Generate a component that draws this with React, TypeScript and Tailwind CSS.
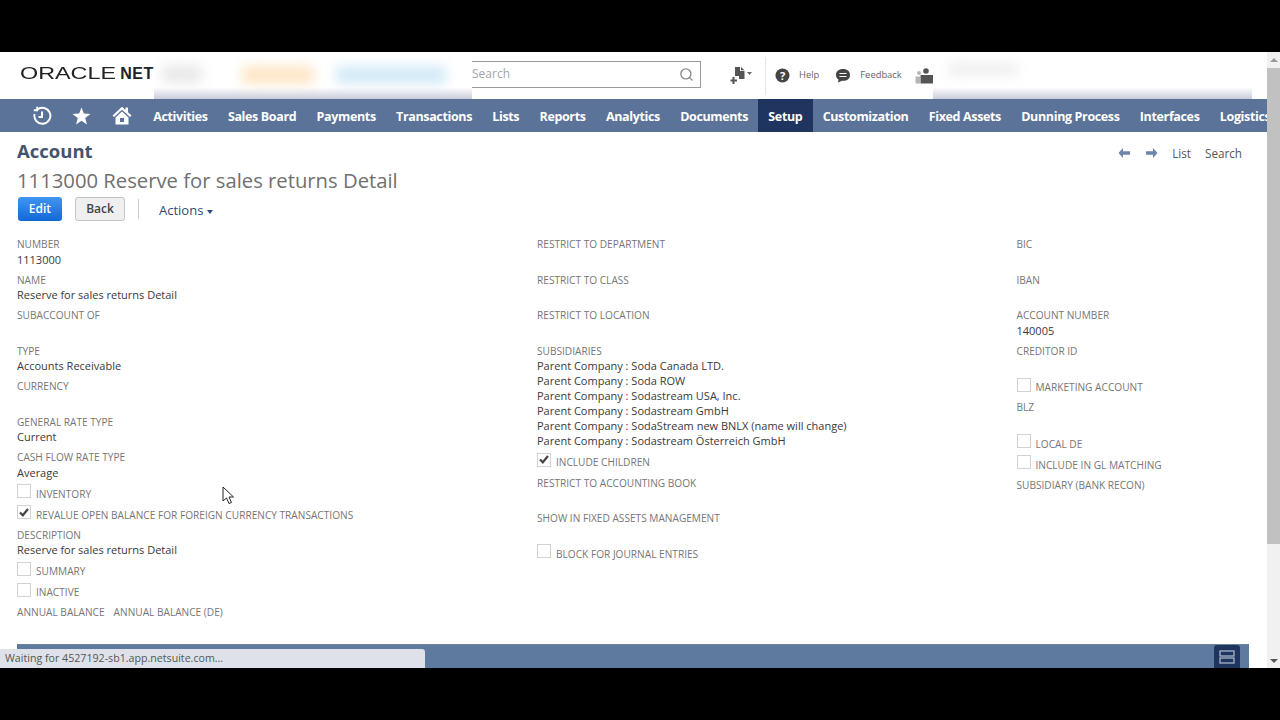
import React from 'react';
import { Search as SearchIcon } from 'lucide-react';

const navItems = ['Activities', 'Sales Board', 'Payments', 'Transactions', 'Lists', 'Reports', 'Analytics', 'Documents', 'Setup', 'Customization', 'Fixed Assets', 'Dunning Process', 'Interfaces', 'Logistics'];

const Field = ({ label, value, h = 'h-[35.5px]' }: { label: string; value?: string; h?: string }) => (
  <div className={`${h} pt-[0.5px] leading-[15px]`}>
    <div className="h-[15px] text-[10.15px] uppercase text-[#767676]">{label}</div>
    {value && <div className="-mt-[0.5px] h-[15px] text-[11px] text-[#3a3a3a]">{value}</div>}
  </div>
);

const Check = ({ label, checked, h = 'h-[21px]' }: { label: string; checked?: boolean; h?: string }) => (
  <div className={`${h} flex items-start gap-[5px]`}>
    <div className="-mt-[1px] flex h-[14px] w-[14px] items-center justify-center border border-[#d2d2d2] bg-white">
      {checked && (
        <svg width="10" height="9" viewBox="0 0 10 9">
          <path d="M1 4.5 L3.8 7.3 L9 1" fill="none" stroke="#444" strokeWidth="2.2" />
        </svg>
      )}
    </div>
    <div className="mt-[1.5px] h-[15px] text-[10.15px] uppercase leading-[15px] text-[#767676]">{label}</div>
  </div>
);

const BlurPatch = ({ children, w }: { children?: React.ReactNode; w: string }) => (
  <div className={`${w} relative h-full shrink-0 overflow-hidden bg-gradient-to-b from-white from-75% to-[#c9cddb]`}>
    {children}
  </div>
);

const App = () => {
  return (
    <div className="relative h-[720px] w-[1280px] overflow-hidden bg-black pt-[52px] font-['Open_Sans',sans-serif]">
      <div className="flex h-[616px] bg-white">
        <div className="flex w-[1267px] flex-col">
          {/* top header */}
          <div className="flex h-[47px] items-center overflow-hidden">
            <div className="flex h-full w-[154px] shrink-0 items-center pb-[3px] pl-[20px] font-['Liberation_Sans',sans-serif] text-[16px] text-[#222]">
              <span className="inline-block w-[102px] origin-left scale-x-[1.46] whitespace-nowrap">ORACLE</span>
              <span className="font-bold tracking-[0.6px]">NET</span>
            </div>
            <BlurPatch w="w-[318px]">
              <div className="absolute left-[8px] top-[13px] h-[18px] w-[40px] rounded bg-[#e9e9e9] blur-[6px]" />
              <div className="absolute left-[88px] top-[14px] h-[18px] w-[72px] rounded bg-[#fde6c6] blur-[6px]" />
              <div className="absolute left-[182px] top-[14px] h-[18px] w-[110px] rounded bg-[#d3eaf7] blur-[6px]" />
            </BlurPatch>
            <div className="mb-[3px] flex h-[27px] w-[229px] shrink-0 items-center justify-between border-y border-r border-[#9a9a9a] pr-[6px] text-[12px] text-[#a5a5a5]">
              Search
              <SearchIcon size={15} strokeWidth={2.2} className="text-[#8a8a8a]" />
            </div>
            <div className="ml-[29px] flex w-[24px] items-center">
              <svg width="24" height="20" viewBox="0 0 24 20">
                <path d="M5 1 H10 V5 H14.5 V13 H9 V10 H5 Z" fill="#555" />
                <path d="M11 1 L14.5 4.2 H11 Z" fill="#555" />
                <path d="M3.5 11 V18 M0.5 14.5 H7" stroke="#555" strokeWidth="2" />
                <path d="M17 6 H22 L19.5 9 Z" fill="#666" />
              </svg>
            </div>
            <div className="ml-[11px] h-[38px] w-px bg-[#e6e6e6]" />
            <svg className="ml-[9px]" width="15" height="15" viewBox="0 0 15 15">
              <circle cx="7.5" cy="7.5" r="7" fill="#444" />
              <text x="7.5" y="11.5" textAnchor="middle" fontSize="11" fontWeight="700" fill="#fff" fontFamily="Open Sans">?</text>
            </svg>
            <span className="ml-[9px] text-[9.4px] text-[#666]">Help</span>
            <svg className="ml-[16px]" width="16" height="15" viewBox="0 0 16 15">
              <path d="M8 1 C3.5 1 1 3.5 1 7 C1 9 2 10.5 3.5 11.5 L3 14.5 L7 12.8 C12 13.2 15 10.8 15 7 C15 3.5 12.5 1 8 1 Z" fill="#444" />
              <path d="M4.5 5.5 H11.5 M4.5 8.5 H11.5" stroke="#fff" strokeWidth="1.2" />
            </svg>
            <span className="ml-[9px] text-[9.4px] text-[#666]">Feedback</span>
            <svg className="ml-[13px]" width="18" height="16" viewBox="0 0 18 16">
              <circle cx="4" cy="5" r="2" fill="#b5b5b5" />
              <path d="M0.5 8.5 H5 V15.5 H0.5 Z" fill="#b5b5b5" />
              <circle cx="11" cy="3" r="2.8" fill="#555" />
              <path d="M5.5 7 H18 V15.5 H5.5 Z" fill="#555" />
            </svg>
            <div className="h-full">
              <BlurPatch w="w-[319px]">
                <div className="absolute left-[15px] top-[10px] h-[14px] w-[70px] rounded bg-[#f0f0f0] blur-[6px]" />
              </BlurPatch>
            </div>
            <div className="h-full flex-1 bg-white" />
          </div>

          {/* main nav */}
          <div className="flex h-[33px] shrink-0 items-center overflow-hidden bg-[#5b7398] text-white">
            <div className="flex w-[143px] shrink-0 items-center">
              <svg className="ml-[32px]" width="20" height="20" viewBox="0 0 20 20" fill="none" stroke="#fff" strokeWidth="1.9">
                <path d="M5 3.9 A8 8 0 1 1 2.6 8" />
                <path d="M5.2 0.8 V4.2 H1.8" />
                <path d="M10 5.5 V11 H6.5" strokeWidth="2" />
              </svg>
              <svg className="ml-[20px]" width="19" height="18" viewBox="0 0 19 18">
                <path d="M9.5 0.5 L11.8 6.6 L18.5 6.9 L13.2 11 L15 17.5 L9.5 13.8 L4 17.5 L5.8 11 L0.5 6.9 L7.2 6.6 Z" fill="#fff" />
              </svg>
              <svg className="ml-[21px]" width="20" height="19" viewBox="0 0 20 19">
                <path d="M10 0.8 L0.5 9.5 L2 11 L10 3.8 L18 11 L19.5 9.5 L16 6.2 V1.5 H13.5 V4 Z" fill="#fff" />
                <path fillRule="evenodd" d="M3.5 11.5 L10 5.6 L16.5 11.5 V18.5 H3.5 Z M8 12 V16 H12 V12 Z" fill="#fff" />
              </svg>
            </div>
            {navItems.map((item) => (
              <div
                key={item}
                className={`flex h-full shrink-0 items-center px-[10.15px] pt-[3px] text-[12.5px] font-bold tracking-[-0.36px] ${item === 'Setup' ? 'bg-[#1f3560]' : ''}`}
              >
                {item}
              </div>
            ))}
          </div>

          {/* record title */}
          <div className="h-[104.5px] shrink-0 pl-[17px] pr-[25px]">
            <div className="flex h-[33px] items-end justify-between">
              <div className="text-[18.5px] font-bold leading-[28px] text-[#44546f]">Account</div>
              <div className="flex items-center pb-[4px] text-[11.7px] leading-[16px] text-[#555]">
                <svg width="14" height="12" viewBox="0 0 14 12">
                  <path d="M6 1 L1.5 6 L6 11 V7.8 H13 V4.2 H6 Z" fill="#6f86a8" />
                </svg>
                <svg className="ml-[14px]" width="14" height="12" viewBox="0 0 14 12">
                  <path d="M8 1 L12.5 6 L8 11 V7.8 H1 V4.2 H8 Z" fill="#6f86a8" />
                </svg>
                <span className="ml-[13px]">List</span>
                <span className="ml-[14px]">Search</span>
              </div>
            </div>
            <div className="h-[30px] text-[20.25px] leading-[30px] text-[#707070]">1113000 Reserve for sales returns Detail</div>
            <div className="mt-[2px] flex items-center">
              <div className="ml-[1px] flex h-[24px] w-[44px] items-center justify-center rounded-[3px] bg-gradient-to-b from-[#3f95f0] to-[#1268d8] text-[12px] font-semibold text-white">Edit</div>
              <div className="ml-[13px] flex h-[24px] w-[50px] items-center justify-center rounded-[3px] border border-[#c4c4c4] bg-[#efefef] text-[12px] font-semibold text-[#444]">Back</div>
              <div className="ml-[13px] h-[20px] w-px bg-[#ccc]" />
              <div className="ml-[20px] mt-[4px] flex items-center gap-[4px] text-[13px] text-[#2f4b7c]">
                Actions
                <span className="mt-[2px] border-x-[3px] border-t-[4px] border-x-transparent border-t-[#2f4b7c]" />
              </div>
            </div>
          </div>

          {/* fields */}
          <div className="flex min-h-0 flex-1 pl-[17px]">
            <div className="w-[520px] shrink-0">
              <Field label="Number" value="1113000" />
              <Field label="Name" value="Reserve for sales returns Detail" />
              <Field label="Subaccount of" />
              <Field label="Type" value="Accounts Receivable" />
              <Field label="Currency" />
              <Field label="General rate type" value="Current" />
              <Field label="Cash flow rate type" value="Average" />
              <Check label="Inventory" />
              <Check label="Revalue open balance for foreign currency transactions" checked />
              <Field label="Description" value="Reserve for sales returns Detail" />
              <Check label="Summary" />
              <Check label="Inactive" />
              <div className="flex gap-[9px]">
                <Field label="Annual balance" />
                <Field label="Annual balance (DE)" />
              </div>
            </div>
            <div className="w-[479.5px] shrink-0">
              <Field label="Restrict to department" />
              <Field label="Restrict to class" />
              <Field label="Restrict to location" />
              <Field
                label="Subsidiaries"
                value="Parent Company : Soda Canada LTD."
                h="h-[30px]"
              />
              {['Parent Company : Soda ROW', 'Parent Company : Sodastream USA, Inc.', 'Parent Company : Sodastream GmbH', 'Parent Company : SodaStream new BNLX (name will change)', 'Parent Company : Sodastream Österreich GmbH'].map((s) => (
                <div key={s} className="h-[15px] text-[11px] leading-[15px] text-[#3a3a3a]">{s}</div>
              ))}
              <div className="h-[5.5px]" />
              <Check label="Include children" checked h="h-[21.5px]" />
              <Field label="Restrict to accounting book" />
              <Field label="Show in fixed assets management" h="h-[34.5px]" />
              <Check label="Block for journal entries" />
            </div>
            <div className="flex-1">
              <Field label="BIC" />
              <Field label="IBAN" />
              <Field label="Account number" value="140005" />
              <Field label="Creditor ID" />
              <Check label="Marketing account" />
              <Field label="BLZ" />
              <Check label="Local DE" />
              <Check label="Include in GL matching" />
              <Field label="Subsidiary (Bank Recon)" />
            </div>
          </div>

          {/* footer bar */}
          <div className="ml-[17px] mr-[18px] flex h-[24px] shrink-0 items-end justify-end border-t border-[#6f8298] bg-[#5f7a9f] pr-[9px]">
            <div className="flex h-[23px] w-[26px] items-center justify-center rounded-t-[3px] bg-[#1f3560]">
              <svg width="16" height="14" viewBox="0 0 16 14" fill="none" stroke="#aab6c8" strokeWidth="1.3">
                <rect x="1" y="1" width="14" height="5" />
                <rect x="1" y="8" width="14" height="5" />
              </svg>
            </div>
          </div>
        </div>

        {/* scrollbar */}
        <div className="flex w-[13px] shrink-0 flex-col bg-[#f1f1f1]">
          <div className="flex h-[16px] items-center justify-center">
            <span className="border-x-[4px] border-b-[4px] border-x-transparent border-b-[#999]" />
          </div>
          <div className="h-[476px] bg-[#c1c1c1]" />
          <div className="flex flex-1 items-end justify-center pb-[5px]">
            <span className="border-x-[4px] border-t-[4px] border-x-transparent border-t-[#555]" />
          </div>
        </div>
      </div>

      {/* browser status bubble */}
      <div className="absolute left-0 top-[649px] flex h-[19px] w-[425px] items-center rounded-tr-[3px] bg-[#dee1ea] pl-[5px] text-[10.65px] text-[#555]">
        Waiting for 4527192-sb1.app.netsuite.com...
      </div>

      {/* mouse pointer */}
      <svg className="absolute left-[222px] top-[486px]" width="13" height="19" viewBox="0 0 13 19">
        <path d="M1 1 V15 L4.5 12 L7 17.5 L9.5 16.5 L7 11 L11.5 11 Z" fill="#fff" stroke="#222" strokeWidth="1" />
      </svg>
    </div>
  );
};

export default App;
